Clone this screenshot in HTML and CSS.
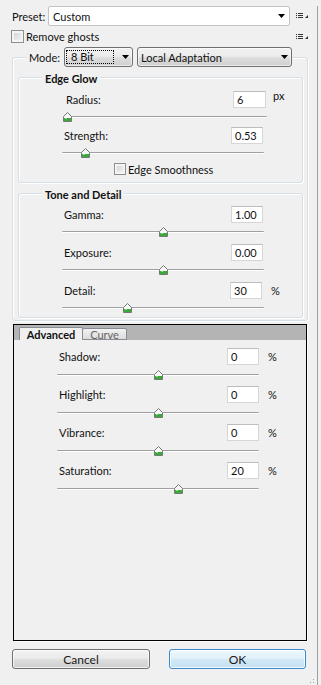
FILE: index.html
```html
<!DOCTYPE html>
<html>
<head>
<meta charset="utf-8">
<link rel="stylesheet" href="styles.css">
</head>
<body>
<div class="dialog">
  <div class="row-preset">
    <span class="lbl-preset">Preset:</span>
    <div class="combo combo-white combo-preset">
      <span class="combo-text">Custom</span>
      <svg class="arrow" viewBox="0 0 7 4"><polygon points="0,0 7,0 3.5,4" fill="#000"/></svg>
    </div>
    <svg class="menu-icon" viewBox="0 0 12 6"><rect x="0" y="0" width="1" height="1" fill="#333"/><rect x="2" y="0" width="5" height="1" fill="#333"/><rect x="0" y="2" width="1" height="1" fill="#333"/><rect x="2" y="2" width="5" height="1" fill="#333"/><rect x="0" y="4" width="1" height="1" fill="#333"/><rect x="2" y="4" width="5" height="1" fill="#333"/><polygon points="12,2 12,5 9,5" fill="#333"/></svg>
  </div>
  <div class="row-ghosts">
    <span class="check"></span>
    <span class="check-label">Remove ghosts</span>
    <svg class="menu-icon" viewBox="0 0 12 6"><rect x="0" y="0" width="1" height="1" fill="#333"/><rect x="2" y="0" width="5" height="1" fill="#333"/><rect x="0" y="2" width="1" height="1" fill="#333"/><rect x="2" y="2" width="5" height="1" fill="#333"/><rect x="0" y="4" width="1" height="1" fill="#333"/><rect x="2" y="4" width="5" height="1" fill="#333"/><polygon points="12,2 12,5 9,5" fill="#333"/></svg>
  </div>

  <div class="outer">
    <div class="mode-row">
      <span class="mode-label">Mode:</span>
      <div class="combo combo-btn combo-bit">
        <span class="focus">8 Bit</span>
        <svg class="arrow" viewBox="0 0 7 4"><polygon points="0,0 7,0 3.5,4" fill="#000"/></svg>
      </div>
      <div class="combo combo-btn combo-method">
        <span class="combo-text">Local Adaptation</span>
        <svg class="arrow" viewBox="0 0 7 4"><polygon points="0,0 7,0 3.5,4" fill="#000"/></svg>
      </div>
    </div>

    <div class="group group-edge">
      <div class="group-title">Edge Glow</div>
      <div class="param-row row-radius">
        <span class="plabel lbl-radius">Radius:</span>
        <span class="field field-wide">6</span>
        <span class="unit unit-px">px</span>
      </div>
      <div class="slider slider-radius"><span class="track"></span><svg class="thumb" style="left:1.5%" viewBox="0 0 9 10"><path d="M4.5 0.5 L8.5 4.5 L8.5 9.5 L0.5 9.5 L0.5 4.5 Z" fill="#f7f7f7" stroke="#737a73"/><rect x="1" y="6" width="7" height="3" fill="#3aa83a"/><rect x="2" y="6" width="2" height="1" fill="#8fd88f"/></svg></div>
      <div class="param-row row-strength">
        <span class="plabel lbl-std">Strength:</span>
        <span class="field">0.53</span>
      </div>
      <div class="slider slider-std"><span class="track"></span><svg class="thumb" style="left:11.6%" viewBox="0 0 9 10"><path d="M4.5 0.5 L8.5 4.5 L8.5 9.5 L0.5 9.5 L0.5 4.5 Z" fill="#f7f7f7" stroke="#737a73"/><rect x="1" y="6" width="7" height="3" fill="#3aa83a"/><rect x="2" y="6" width="2" height="1" fill="#8fd88f"/></svg></div>
      <div class="smooth-row">
        <span class="check check-small"></span>
        <span class="check-label">Edge Smoothness</span>
      </div>
    </div>

    <div class="group group-tone">
      <div class="group-title">Tone and Detail</div>
      <div class="param-row row-first">
        <span class="plabel lbl-std">Gamma:</span>
        <span class="field">1.00</span>
      </div>
      <div class="slider slider-std"><span class="track"></span><svg class="thumb" style="left:50%" viewBox="0 0 9 10"><path d="M4.5 0.5 L8.5 4.5 L8.5 9.5 L0.5 9.5 L0.5 4.5 Z" fill="#f7f7f7" stroke="#737a73"/><rect x="1" y="6" width="7" height="3" fill="#3aa83a"/><rect x="2" y="6" width="2" height="1" fill="#8fd88f"/></svg></div>
      <div class="param-row row-next">
        <span class="plabel lbl-std">Exposure:</span>
        <span class="field">0.00</span>
      </div>
      <div class="slider slider-std"><span class="track"></span><svg class="thumb" style="left:50%" viewBox="0 0 9 10"><path d="M4.5 0.5 L8.5 4.5 L8.5 9.5 L0.5 9.5 L0.5 4.5 Z" fill="#f7f7f7" stroke="#737a73"/><rect x="1" y="6" width="7" height="3" fill="#3aa83a"/><rect x="2" y="6" width="2" height="1" fill="#8fd88f"/></svg></div>
      <div class="param-row row-next">
        <span class="plabel lbl-detail">Detail:</span>
        <span class="field">30</span>
        <span class="unit unit-pct">%</span>
      </div>
      <div class="slider slider-std"><span class="track"></span><svg class="thumb" style="left:32%" viewBox="0 0 9 10"><path d="M4.5 0.5 L8.5 4.5 L8.5 9.5 L0.5 9.5 L0.5 4.5 Z" fill="#f7f7f7" stroke="#737a73"/><rect x="1" y="6" width="7" height="3" fill="#3aa83a"/><rect x="2" y="6" width="2" height="1" fill="#8fd88f"/></svg></div>
    </div>
  </div>

  <div class="tabpanel">
    <div class="tab-strip">
      <span class="tab tab-active">Advanced</span>
      <span class="tab tab-inactive">Curve</span>
    </div>
    <div class="tab-body">
      <div class="param-row row-adv-first">
        <span class="plabel lbl-adv">Shadow:</span>
        <span class="field">0</span>
        <span class="unit unit-pct">%</span>
      </div>
      <div class="slider slider-adv"><span class="track"></span><svg class="thumb" style="left:50%" viewBox="0 0 9 10"><path d="M4.5 0.5 L8.5 4.5 L8.5 9.5 L0.5 9.5 L0.5 4.5 Z" fill="#f7f7f7" stroke="#737a73"/><rect x="1" y="6" width="7" height="3" fill="#3aa83a"/><rect x="2" y="6" width="2" height="1" fill="#8fd88f"/></svg></div>
      <div class="param-row row-adv">
        <span class="plabel lbl-adv">Highlight:</span>
        <span class="field">0</span>
        <span class="unit unit-pct">%</span>
      </div>
      <div class="slider slider-adv"><span class="track"></span><svg class="thumb" style="left:50%" viewBox="0 0 9 10"><path d="M4.5 0.5 L8.5 4.5 L8.5 9.5 L0.5 9.5 L0.5 4.5 Z" fill="#f7f7f7" stroke="#737a73"/><rect x="1" y="6" width="7" height="3" fill="#3aa83a"/><rect x="2" y="6" width="2" height="1" fill="#8fd88f"/></svg></div>
      <div class="param-row row-adv">
        <span class="plabel lbl-adv">Vibrance:</span>
        <span class="field">0</span>
        <span class="unit unit-pct">%</span>
      </div>
      <div class="slider slider-adv"><span class="track"></span><svg class="thumb" style="left:50%" viewBox="0 0 9 10"><path d="M4.5 0.5 L8.5 4.5 L8.5 9.5 L0.5 9.5 L0.5 4.5 Z" fill="#f7f7f7" stroke="#737a73"/><rect x="1" y="6" width="7" height="3" fill="#3aa83a"/><rect x="2" y="6" width="2" height="1" fill="#8fd88f"/></svg></div>
      <div class="param-row row-adv">
        <span class="plabel lbl-adv">Saturation:</span>
        <span class="field">20</span>
        <span class="unit unit-pct">%</span>
      </div>
      <div class="slider slider-adv"><span class="track"></span><svg class="thumb" style="left:60%" viewBox="0 0 9 10"><path d="M4.5 0.5 L8.5 4.5 L8.5 9.5 L0.5 9.5 L0.5 4.5 Z" fill="#f7f7f7" stroke="#737a73"/><rect x="1" y="6" width="7" height="3" fill="#3aa83a"/><rect x="2" y="6" width="2" height="1" fill="#8fd88f"/></svg></div>
    </div>
  </div>

  <div class="buttons">
    <span class="btn btn-cancel">Cancel</span>
    <span class="btn btn-ok">OK</span>
  </div>

  <svg class="grip" viewBox="0 0 10 10"><rect x="8" y="0" width="1" height="1" fill="#a0a0a0"/><rect x="5" y="3" width="1" height="1" fill="#a0a0a0"/><rect x="8" y="3" width="1" height="1" fill="#a0a0a0"/><rect x="2" y="6" width="1" height="1" fill="#a0a0a0"/><rect x="5" y="6" width="1" height="1" fill="#a0a0a0"/><rect x="8" y="6" width="1" height="1" fill="#a0a0a0"/><rect x="2" y="9" width="1" height="1" fill="#a0a0a0"/><rect x="5" y="9" width="1" height="1" fill="#a0a0a0"/><rect x="8" y="9" width="1" height="1" fill="#a0a0a0"/></svg>
</div>
</body>
</html>
```

FILE: styles.css
```css
* { box-sizing: border-box; }
html, body { margin: 0; padding: 0; }
body {
  background: #f0f0f0;
  font-family: Lato, "Liberation Sans", sans-serif;
  font-size: 11px;
  line-height: 13px;
  color: #111;
  width: 321px;
  height: 685px;
  overflow: hidden;
}
.dialog {
  width: 318px;
  height: 685px;
  border-right: 1px solid #a0a0a0;
  position: relative;
}

/* top rows */
.row-preset {
  display: flex;
  align-items: center;
  height: 20px;
  margin-top: 6px;
  padding-left: 12px;
  padding-right: 9px;
}
.lbl-preset { width: 36px; }
.combo {
  display: flex;
  align-items: center;
  height: 20px;
}
.combo-white {
  background: #fff;
  border: 1px solid #c3c3c3;
  border-radius: 2px;
}
.combo-preset { width: 242px; padding-left: 4px; padding-right: 4px; }
.arrow { margin-left: auto; width: 7px; height: 4px; flex: none; }
.menu-icon { margin-left: auto; width: 12px; height: 6px; flex: none; }

.row-ghosts {
  display: flex;
  align-items: center;
  height: 13px;
  margin-top: 4px;
  padding-left: 11px;
  padding-right: 9px;
}
.check {
  width: 13px;
  height: 13px;
  flex: none;
  border: 1px solid #8e8f8f;
  background: linear-gradient(135deg, #cdd0d4, #f7f7f7);
  box-shadow: inset 0 0 0 2px #f4f4f4;
}
.check-small { width: 12px; height: 12px; }
.check-label { margin-left: 2px; }

/* outer group */
.outer {
  margin-top: 14px;
  margin-left: 12px;
  width: 296px;
  border: 1px solid #d5dfe5;
  border-radius: 3px;
  box-shadow: inset 1px 1px 0 #fff, 1px 1px 0 #fff;
  padding-bottom: 2px;
}
.mode-row {
  display: flex;
  align-items: center;
  width: max-content;
  height: 20px;
  margin-top: -11px;
  margin-left: 13px;
  padding-left: 3px;
  background: #f0f0f0;
}
.mode-label { width: 35px; }
.combo-btn {
  border: 1px solid #707070;
  border-radius: 3px;
  background: linear-gradient(#f2f2f2 0%, #ebebeb 45%, #dddddd 55%, #cfcfcf 100%);
  box-shadow: inset 0 0 0 1px rgba(255,255,255,0.6);
}
.combo-bit { width: 69px; padding-left: 1px; padding-right: 3px; }
.combo-method { width: 155px; margin-left: 4px; padding-left: 3px; padding-right: 3px; }
.focus {
  width: 48px;
  height: 14px;
  border: 1px dotted #000;
  padding-left: 4px;
  line-height: 12px;
}

.group {
  margin-left: 5px;
  width: 285px;
  border: 1px solid #d5dfe5;
  border-radius: 3px;
  box-shadow: inset 1px 1px 0 #fff, 1px 1px 0 #fff;
}
.group-edge { margin-top: 10px; padding-bottom: 7px; }
.group-tone { margin-top: 10px; padding-bottom: 4px; }
.group-title {
  width: max-content;
  margin-top: -6px;
  margin-left: 23px;
  padding: 0 3px;
  background: #f0f0f0;
  font-weight: bold;
}

.param-row {
  display: flex;
  align-items: center;
  height: 17px;
}
.row-radius { margin-top: 6px; padding-left: 47px; }
.row-strength { margin-top: 5px; padding-left: 45px; }
.row-first { margin-top: 5px; padding-left: 45px; }
.row-next { margin-top: 7px; padding-left: 45px; }
.lbl-radius { width: 167px; }
.lbl-std { width: 167px; }
.lbl-detail { width: 166px; }
.plabel { flex: none; }
.field {
  width: 32px;
  height: 17px;
  flex: none;
  background: #fff;
  border: 1px solid #d6d6d6;
  border-top-color: #bdbdbd;
  padding-left: 3px;
  line-height: 15px;
}
.field-wide { width: 33px; }
.unit { flex: none; }
.unit-px { margin-left: 7px; align-self: flex-start; margin-top: -2px; }
.unit-pct { margin-left: 9px; }

.slider {
  position: relative;
  height: 11px;
  margin-top: 3px;
}
.slider-radius { margin-left: 45px; width: 203px; }
.slider-std { margin-left: 43px; width: 202px; }
.slider-adv { margin-left: 43px; width: 202px; margin-top: 4px; }
.track {
  display: block;
  position: absolute;
  left: 0;
  right: 0;
  top: 5px;
  height: 2px;
  border-top: 1px solid #a0a0a0;
  border-bottom: 1px solid #fff;
  border-radius: 1px;
}
.thumb {
  position: absolute;
  top: 1px;
  width: 9px;
  height: 10px;
  margin-left: -4px;
}

.smooth-row {
  display: flex;
  align-items: center;
  height: 12px;
  margin-top: 5px;
  padding-left: 95px;
}

/* tab panel */
.tabpanel {
  margin-top: 3px;
  margin-left: 13px;
  width: 294px;
  height: 317px;
  border: 1px solid #000;
  box-shadow: 1px 1px 0 #fff;
}
.tab-strip {
  display: flex;
  align-items: flex-end;
  height: 15px;
  background: #b4b4b4;
  padding-left: 5px;
}
.tab {
  display: flex;
  align-items: center;
  justify-content: center;
  border: 1px solid #898c95;
  border-bottom: none;
  border-radius: 2px 2px 0 0;
}
.tab-active {
  width: 64px;
  height: 13px;
  background: #f0f0f0;
  font-weight: bold;
}
.tab-inactive {
  width: 44px;
  height: 12px;
  background: linear-gradient(#f2f2f2, #dcdcdc);
  color: #666;
  border-left: none;
  border-bottom: 1px solid #898c95;
}
.tab-body { padding-top: 0; }
.row-adv-first { margin-top: 8px; padding-left: 45px; }
.row-adv { margin-top: 6px; padding-left: 45px; }
.lbl-adv { width: 168px; }

/* buttons */
.buttons {
  display: flex;
  margin-top: 8px;
  padding-left: 12px;
}
.btn {
  display: flex;
  align-items: center;
  justify-content: center;
  height: 20px;
  border-radius: 3px;
  font-size: 12px;
  color: #1a1a1a;
}
.btn-cancel {
  width: 138px;
  border: 1px solid #707070;
  background: linear-gradient(#f2f2f2 0%, #ebebeb 45%, #dddddd 55%, #cfcfcf 100%);
  box-shadow: inset 0 0 0 1px rgba(255,255,255,0.7);
}
.btn-ok {
  width: 137px;
  margin-left: 19px;
  border: 1px solid #3c8ccc;
  background: linear-gradient(#eef7fd 0%, #e2f1fa 45%, #d0e8f6 55%, #c4e1f2 100%);
  box-shadow: inset 0 0 0 1px rgba(255,255,255,0.8);
}

.grip {
  position: absolute;
  right: 2px;
  bottom: 2px;
  width: 10px;
  height: 10px;
}
```
